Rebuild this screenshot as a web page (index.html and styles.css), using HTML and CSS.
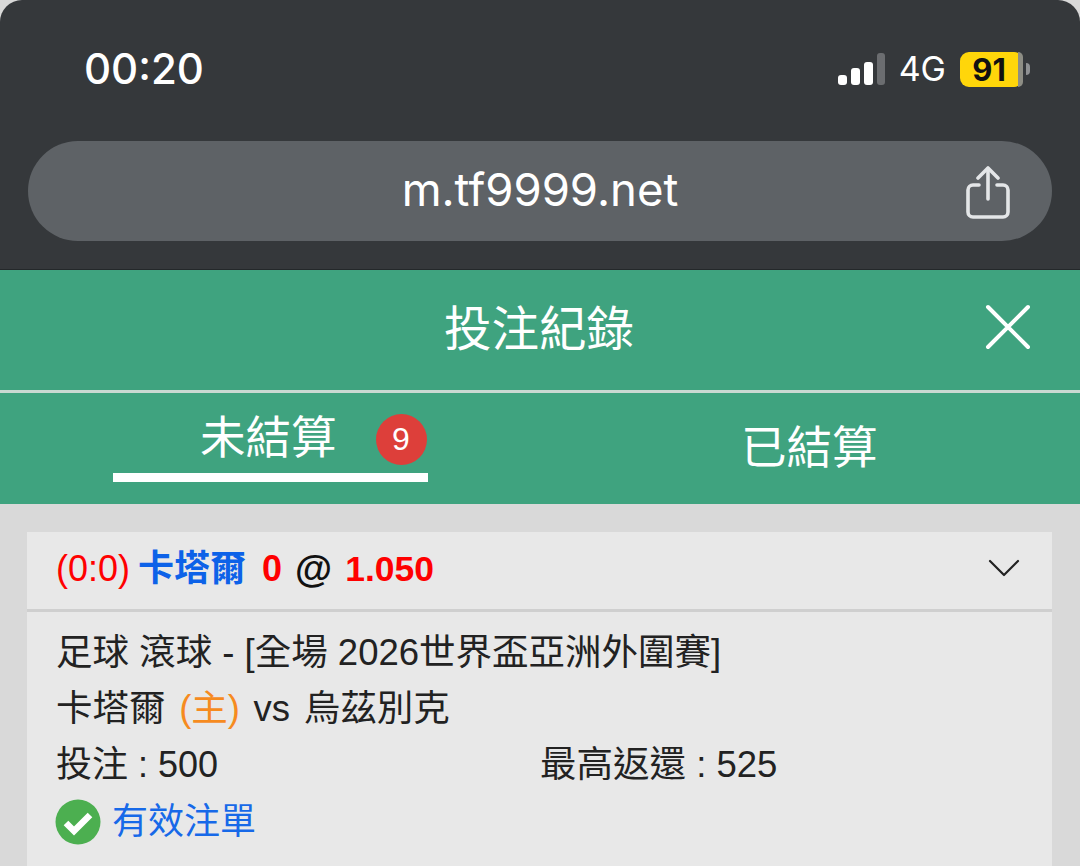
FILE: index.html
```html
<!DOCTYPE html>
<html lang="zh-Hant">
<head>
<meta charset="utf-8">
<title>投注紀錄</title>
<link rel="stylesheet" href="styles.css">
</head>
<body>
<div class="browser">
  <div class="status">
    <span class="time">00:20</span>
    <div class="status-right">
      <svg class="signal" width="47" height="32" viewBox="0 0 47 32">
        <rect x="0" y="22" width="9" height="10" rx="3" fill="#fff"/>
        <rect x="13" y="15" width="9" height="17" rx="3" fill="#fff"/>
        <rect x="26" y="9" width="9" height="23" rx="3" fill="#fff"/>
        <rect x="39" y="0" width="8" height="32" rx="3" fill="#6b6d70"/>
      </svg>
      <span class="net">4G</span>
      <div class="battery"><span class="battery-num">91</span><span class="battery-rest"></span></div>
      <span class="battery-cap"></span>
    </div>
  </div>
  <div class="urlbar">
    <span class="url">m.tf9999.net</span>
    <svg class="share" width="46" height="54" viewBox="0 0 46 54" fill="none" stroke="#e4e6e8" stroke-width="3.6" stroke-linecap="round" stroke-linejoin="round">
      <path d="M14 19H8a5 5 0 0 0-5 5v22a5 5 0 0 0 5 5h30a5 5 0 0 0 5-5V24a5 5 0 0 0-5-5h-6"/>
      <path d="M23 33V3"/>
      <path d="M13 12L23 2l10 10"/>
    </svg>
  </div>
</div>
<header class="titlebar">
  <h1 class="title">投注紀錄</h1>
  <svg class="close" width="46" height="46" viewBox="0 0 46 46" stroke="#fff" stroke-width="4" stroke-linecap="round">
    <path d="M3 3L43 43M43 3L3 43"/>
  </svg>
</header>
<nav class="tabs">
  <div class="tab tab-active">
    <span class="tab-label">未結算</span>
    <span class="badge">9</span>
  </div>
  <div class="tab tab-other"><span class="tab-label">已結算</span></div>
</nav>
<main class="content">
  <section class="card">
    <div class="card-head">
      <div class="bet-line">
        <span class="score">(0:0)</span>
        <b class="team">卡塔爾</b>
        <b class="red">0</b>
        <b class="at">@</b>
        <b class="odds">1.050</b>
      </div>
      <svg class="chev" width="32" height="18" viewBox="0 0 32 18" fill="none" stroke="#222" stroke-width="2.2" stroke-linecap="round" stroke-linejoin="round"><path d="M2 2l14 14L30 2"/></svg>
    </div>
    <div class="card-body">
      <div class="row">足球 滾球 - [全場 2026世界盃亞洲外圍賽]</div>
      <div class="row row-match">卡塔爾 <span class="home">(主)</span> vs 烏茲別克</div>
      <div class="row row-split"><span class="col col-stake">投注 : 500</span><span class="col">最高返還 : 525</span></div>
      <div class="row row-status">
        <svg class="ok" width="46" height="46" viewBox="0 0 46 46"><circle cx="23" cy="23" r="22.5" fill="#4caf50"/><path d="M11 24l8 8 16-16" fill="none" stroke="#fff" stroke-width="6.5"/></svg>
        <span class="valid">有效注單</span>
      </div>
    </div>
  </section>
</main>
</body>
</html>
```
FILE: styles.css
```css
html, body {
  margin: 0;
  padding: 0;
}
body {
  width: 1080px;
  height: 866px;
  overflow: hidden;
  background: #d9d9d9;
  font-family: "Liberation Sans", "Noto Sans CJK TC", sans-serif;
  color: #222;
}
.browser {
  height: 270px;
  box-sizing: border-box;
  background: #35383b;
  border-radius: 22px 22px 0 0;
  padding: 0 28px;
  border-bottom: 1px solid #24282a;
}
.status {
  height: 141px;
  box-sizing: border-box;
  padding: 44px 22px 0 56px;
  display: flex;
  justify-content: space-between;
  align-items: flex-start;
}
.time {
  font-family: Inter, "Liberation Sans", sans-serif;
  font-size: 42px;
  line-height: 50px;
  font-weight: 500;
  color: #fff;
}
.status-right {
  display: flex;
  align-items: center;
  margin-top: 7px;
}
.signal {
  display: block;
  margin-right: 14px;
}
.net {
  font-family: Inter, "Liberation Sans", sans-serif;
  font-size: 34px;
  line-height: 36px;
  color: #fff;
  margin-right: 14px;
}
.battery {
  width: 63px;
  height: 35px;
  border-radius: 9px;
  background: #ffd60a;
  display: flex;
}
.battery-num {
  flex: 1;
  text-align: center;
  font-family: Inter, "Liberation Sans", sans-serif;
  font-size: 31px;
  line-height: 35px;
  font-weight: 700;
  color: #111;
}
.battery-rest {
  width: 5px;
  background: #8d8d84;
  border-radius: 0 9px 9px 0;
}
.battery-cap {
  width: 4px;
  height: 12px;
  margin-left: 3px;
  background: #8f9193;
  border-radius: 0 6px 6px 0;
}
.urlbar {
  height: 100px;
  border-radius: 50px;
  background: #5e6266;
  display: flex;
  align-items: center;
  justify-content: center;
  position: relative;
}
.url {
  font-family: Inter, "Liberation Sans", sans-serif;
  font-size: 45.5px;
  line-height: 52px;
  margin-top: -2px;
  color: #fff;
}
.share {
  position: absolute;
  right: 41px;
  top: 25px;
}
.titlebar {
  height: 123px;
  box-sizing: border-box;
  background: #3fa37f;
  border-bottom: 3px solid #c9d9d2;
  display: flex;
  align-items: center;
  justify-content: center;
  position: relative;
}
.title {
  margin: 0 2px 0 0;
  font-size: 47.5px;
  font-weight: 400;
  color: #fff;
  line-height: 60px;
}
.close {
  position: absolute;
  left: 985px;
  top: 34px;
}
.tabs {
  height: 111px;
  background: #3fa37f;
  display: flex;
}
.tab {
  box-sizing: border-box;
  color: #fff;
  display: flex;
  align-items: center;
}
.tab-active {
  width: 315px;
  height: 89px;
  margin-left: 113px;
  padding-left: 87px;
  border-bottom: 9px solid #fff;
  gap: 39px;
}
.tab-other {
  margin-left: 313px;
  height: 111px;
}
.tab-label {
  font-size: 45.5px;
  line-height: 56px;
}
.tab-active .tab-label {
  margin-top: 12px;
}
.badge {
  width: 51px;
  height: 51px;
  border-radius: 50%;
  background: #dd3f3a;
  font-size: 32px;
  line-height: 51px;
  text-align: center;
  margin-top: 12px;
}
.content {
  padding: 28px 28px 0 27px;
}
.card {
  background: #e8e8e8;
  height: 334px;
  overflow: hidden;
}
.card-head {
  height: 77px;
  border-bottom: 3px solid #cfcfcf;
  padding: 0 32px 0 29px;
  display: flex;
  align-items: center;
  justify-content: space-between;
}
.bet-line {
  font-size: 36px;
  line-height: 76px;
  white-space: nowrap;
  display: flex;
  gap: 9px;
  margin-top: -3px;
}
.score { color: #f00; }
.team { color: #0d62e8; margin-left: -1px; }
.red { color: #f00; margin-left: 7px; }
.at { color: #111; font-size: 38px; margin-left: 4px; }
.odds { color: #f00; font-size: 35.5px; margin-left: 4px; }
.chev {
  display: block;
  margin-top: -6px;
}
.card-body {
  padding: 13px 28px 0 29px;
}
.row {
  font-size: 36.5px;
  line-height: 56px;
  color: #222;
  white-space: nowrap;
}
.row-match { word-spacing: 3.5px; }
.home { color: #f68b1f; }
.row-split { display: flex; }
.col { width: 484px; }
.col-stake { font-size: 36px; }
.row-status {
  display: flex;
  align-items: center;
  gap: 11px;
  margin-top: 1px;
}
.ok { display: block; margin-left: -1px; }
.valid { color: #1769e8; font-size: 36px; }
```
